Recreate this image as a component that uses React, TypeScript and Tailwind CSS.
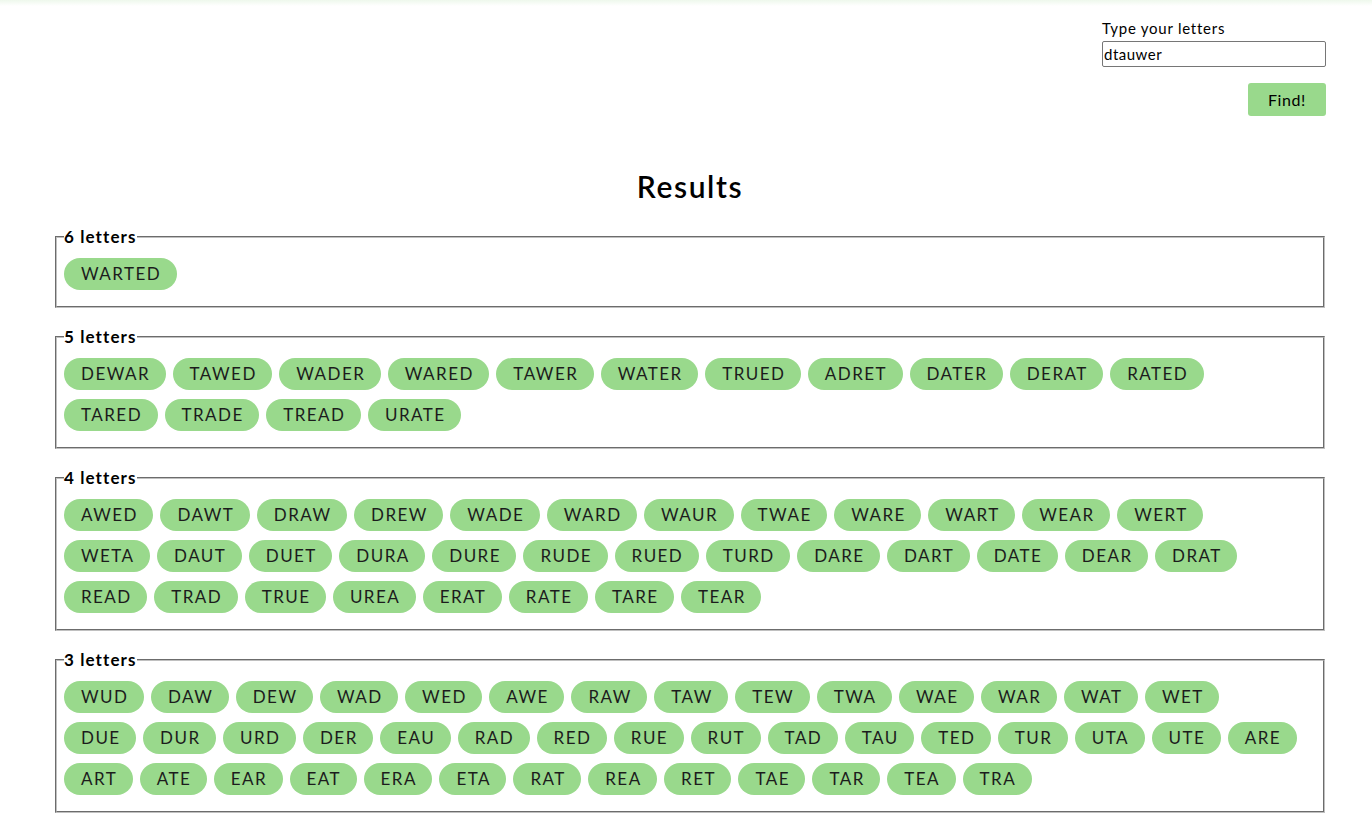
import { useState } from "react";

const groups: { label: string; rows: string[][] }[] = [
  { label: "6 letters", rows: [["WARTED"]] },
  {
    label: "5 letters",
    rows: [
      ["DEWAR", "TAWED", "WADER", "WARED", "TAWER", "WATER", "TRUED", "ADRET", "DATER", "DERAT", "RATED"],
      ["TARED", "TRADE", "TREAD", "URATE"],
    ],
  },
  {
    label: "4 letters",
    rows: [
      ["AWED", "DAWT", "DRAW", "DREW", "WADE", "WARD", "WAUR", "TWAE", "WARE", "WART", "WEAR", "WERT"],
      ["WETA", "DAUT", "DUET", "DURA", "DURE", "RUDE", "RUED", "TURD", "DARE", "DART", "DATE", "DEAR", "DRAT"],
      ["READ", "TRAD", "TRUE", "UREA", "ERAT", "RATE", "TARE", "TEAR"],
    ],
  },
  {
    label: "3 letters",
    rows: [
      ["WUD", "DAW", "DEW", "WAD", "WED", "AWE", "RAW", "TAW", "TEW", "TWA", "WAE", "WAR", "WAT", "WET"],
      ["DUE", "DUR", "URD", "DER", "EAU", "RAD", "RED", "RUE", "RUT", "TAD", "TAU", "TED", "TUR", "UTA", "UTE", "ARE"],
      ["ART", "ATE", "EAR", "EAT", "ERA", "ETA", "RAT", "REA", "RET", "TAE", "TAR", "TEA", "TRA"],
    ],
  },
];

export default function App() {
  const [letters, setLetters] = useState("dtauwer");

  return (
    <div className="min-h-screen bg-white text-black font-['Lato','Noto_Sans',sans-serif]">
      <div className="h-[6px] bg-gradient-to-b from-[#eef8ec] to-white" />

      <div className="flex justify-end pr-[46px] pt-[12px]">
        <div className="w-[224px] flex flex-col">
          <label className="text-[15px] leading-[20px] tracking-[0.75px]">Type your letters</label>
          <input
            type="text"
            value={letters}
            onChange={(e) => setLetters(e.target.value)}
            className="mt-[3px] h-[26px] px-[1px] text-[15px] tracking-[0.5px] border border-[#767676] rounded-[2px] outline-none"
          />
          <button className="self-end mt-[16px] w-[78px] h-[33px] bg-[#99d98c] rounded-[3px] text-[16px] tracking-[0.6px]">
            Find!
          </button>
        </div>
      </div>

      <div className="ml-[55px] mr-[47px]">
        <h2 className="mt-[50px] text-center text-[30px] font-semibold leading-[40px] tracking-[1.6px]">Results</h2>

        <div className="mt-[20px] flex flex-col gap-[18px]">
          {groups.map((g) => (
            <fieldset
              key={g.label}
              className="border-2 [border-style:groove] border-[#c0c0c0] px-[7px] pt-[10px] pb-[16px]"
            >
              <legend className="text-[17px] font-bold leading-[22px] tracking-[1.1px]">{g.label}</legend>
              <div className="flex flex-col gap-[9px]">
                {g.rows.map((row, i) => (
                  <div key={i} className="flex gap-[7px]">
                    {row.map((w) => (
                      <span
                        key={w}
                        className="h-[32px] pl-[17px] pr-[15.5px] flex items-center rounded-full bg-[#99d98c] text-[17px] tracking-[1.45px] text-[#1c1c1c]"
                      >
                        {w}
                      </span>
                    ))}
                  </div>
                ))}
              </div>
            </fieldset>
          ))}
        </div>
      </div>
    </div>
  );
}
